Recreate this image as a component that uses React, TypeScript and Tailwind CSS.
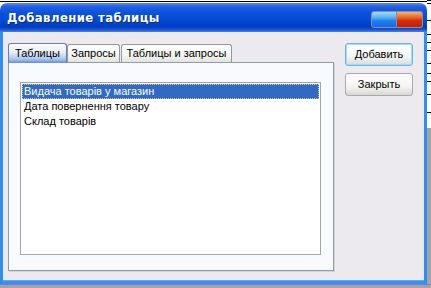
const font = { fontFamily: '"Liberation Sans", Arial, sans-serif' };

const items = ["Видача товарів у магазин", "Дата повернення товару", "Склад товарів"];

function TitleBar() {
  return (
    <div className="flex h-[29px] items-center justify-between rounded-t-[7px] bg-[linear-gradient(180deg,#5a8cf0_0%,#2460e6_12%,#0852dc_35%,#044bd4_60%,#003cc0_82%,#1656d8_92%,#4584ee_100%)] pl-[7px] pr-[4px]">
      <span
        className="pt-[1px] text-[13px] font-bold tracking-[0.4px] text-white [text-shadow:1px_1px_0_#0a2a80]"
        style={{ fontFamily: '"DejaVu Sans Condensed", "Liberation Sans", sans-serif' }}
      >
        Добавление таблицы
      </span>
      <div className="mt-[3px] flex">
        <div className="h-[17px] w-[26px] rounded-l-[3px] border border-[#8d8d9a] bg-[linear-gradient(180deg,#9fdcf8_0%,#58b6f2_35%,#1e7ef0_60%,#1467ea_100%)]" />
        <div className="h-[17px] w-[26px] rounded-r-[3px] border border-l-0 border-[#8d8d9a] bg-[linear-gradient(180deg,#f6b470_0%,#ea6a2a_35%,#d22a0a_60%,#c82008_100%)]" />
      </div>
    </div>
  );
}

function Tabs() {
  return (
    <div className="flex items-end text-[11px] text-black" style={font}>
      <div className="relative z-10 -mb-px flex h-[20px] w-[59px] items-center justify-center rounded-t-[3px] border border-[#6a7fa6] border-b-0 bg-[linear-gradient(180deg,#fbfbfc_0%,#e8ecf4_45%,#a8c4ee_80%,#5a8fe0_100%)] pb-[1px]">
        Таблицы
      </div>
      <div className="flex h-[18px] w-[53px] items-center justify-center rounded-t-[3px] border border-[#919b9c] border-b-0 bg-[linear-gradient(180deg,#ffffff_0%,#f3f3ef_60%,#e4e4df_100%)]">
        Запросы
      </div>
      <div className="ml-[1px] flex h-[18px] w-[111px] items-center justify-center rounded-t-[3px] border border-[#919b9c] border-b-0 bg-[linear-gradient(180deg,#ffffff_0%,#f3f3ef_60%,#e4e4df_100%)]">
        Таблицы и запросы
      </div>
    </div>
  );
}

function Panel() {
  return (
    <div className="flex flex-col">
      <Tabs />
      <div className="h-[209px] w-[326px] border border-[#8f9bb0] bg-[#f9fafe] px-[11px] pt-[19px] shadow-[1px_1px_0_#d4d4e0]">
        <div className="h-[173px] w-[301px] border border-[#a5a5a8] bg-white p-[1px] text-[11px] leading-[13px] text-black" style={font}>
          {items.map((it, i) => (
            <div
              key={it}
              className={
                i === 0
                  ? "border border-dotted border-[#c8c8a0] bg-[#316ac5] pl-[1px] text-white"
                  : "border border-transparent pl-[1px]"
              }
            >
              {it}
            </div>
          ))}
        </div>
      </div>
    </div>
  );
}

function Btn({ label, focus }: { label: string; focus?: boolean }) {
  return (
    <div
      className={
        "flex h-[23px] w-[68px] items-center justify-center rounded-[3px] border text-[11px] text-black " +
        (focus
          ? "border-[#5fb8ea] shadow-[inset_0_0_0_1px_#a8dcf6] bg-[linear-gradient(180deg,#ffffff_0%,#f4f4f2_60%,#dcdcd6_100%)]"
          : "border-[#a8a8b0] bg-[linear-gradient(180deg,#ffffff_0%,#f4f4f2_60%,#d8d8d2_100%)]")
      }
      style={font}
    >
      {label}
    </div>
  );
}

function Backdrop() {
  const lines = [3, 17, 14, 8, 8, 13, 10, 8, 13, 18, 16];
  return (
    <div className="flex w-[4px] flex-col bg-white">
      {lines.map((h, i) => (
        <div key={i} className="border-t border-black" style={{ height: h }} />
      ))}
      <div className="flex-1 bg-[#a4a4a4]" />
    </div>
  );
}

export default function App() {
  return (
    <div className="flex h-[288px] w-[431px] flex-col overflow-hidden bg-[#a4a4a4]">
      <div className="flex h-[284px]">
        <div className="flex w-[427px] flex-col bg-white pt-[1px]">
          <div className="h-[2px] border-t border-black" />
          <div className="flex flex-1 flex-col">
            <TitleBar />
            <div className="flex flex-1 border-x-[3px] border-b-[3px] border-x-[#2f8ef2] border-b-[#3a8ff0] bg-[#ece9ef] shadow-[inset_0_-1px_0_#5aa8f8]">
              <div className="flex flex-1 pl-[5px] pt-[11px]">
                <Panel />
                <div className="ml-[11px] flex flex-col gap-[7px] pt-[0px]">
                  <Btn label="Добавить" focus />
                  <Btn label="Закрыть" />
                </div>
              </div>
            </div>
          </div>
        </div>
        <Backdrop />
      </div>
      <div className="h-[1px] bg-[#7a7ad0]" />
    </div>
  );
}
